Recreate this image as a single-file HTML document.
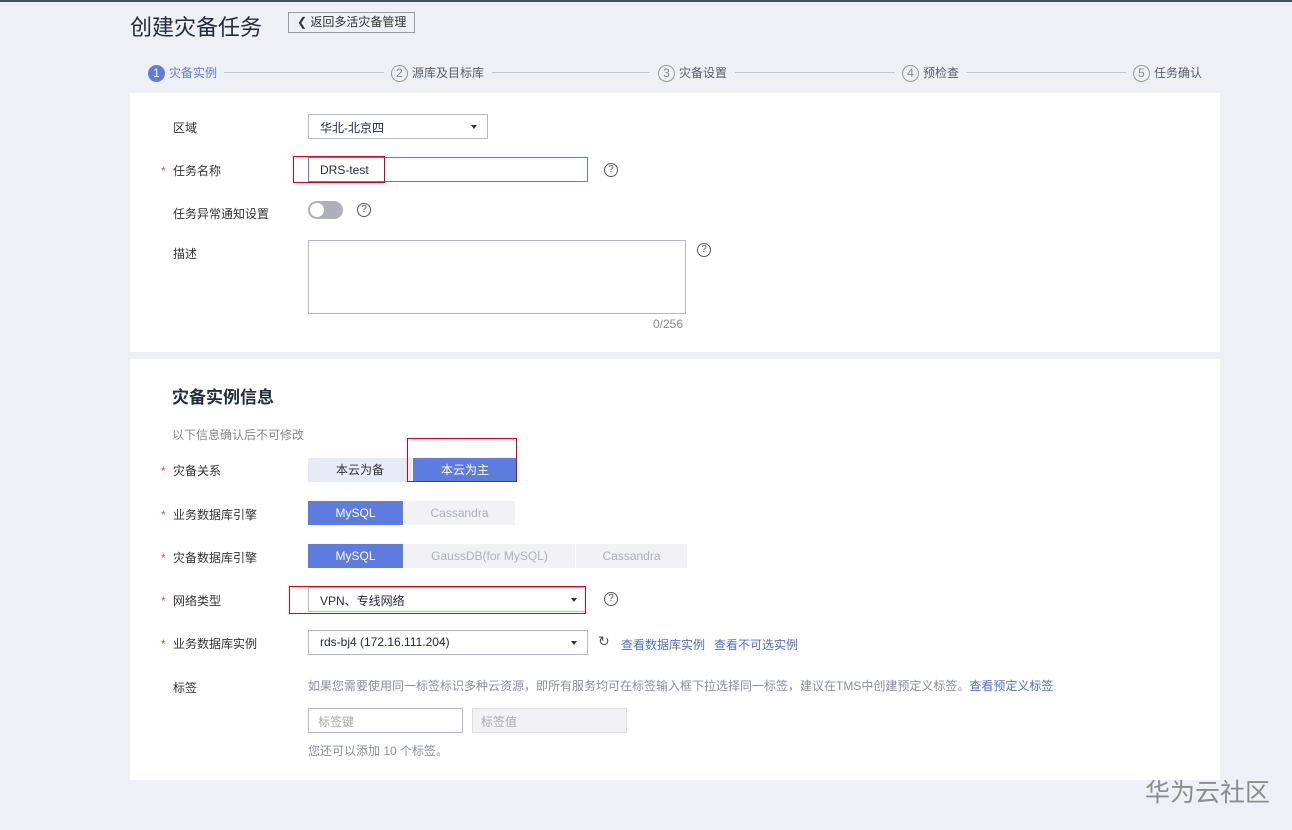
<!DOCTYPE html>
<html><head><meta charset="utf-8"><style>
*{box-sizing:border-box;margin:0;padding:0}
body{width:1292px;height:830px;background:#eff0f5;font-family:"Liberation Sans","Noto Sans CJK SC",sans-serif;font-size:12px;color:#252b3a;position:relative;overflow:hidden}
.a{position:absolute;white-space:nowrap}
.card{position:absolute;background:#fff;left:130px;width:1090px}
.lbl{position:absolute;left:173px;font-size:12px;color:#333;margin-top:-1px}
.star{position:absolute;left:161px;color:#e0533f;margin-top:-1px}
.box{position:absolute;border:1px solid #b5b8c2;background:#fff}
.caret{position:absolute;width:0;height:0;border-left:3px solid transparent;border-right:3px solid transparent;border-top:4px solid #333}
.q{position:absolute;width:14px;height:14px;border:1px solid #555;border-radius:50%;font-size:10px;line-height:12px;text-align:center;color:#555}
.red{position:absolute;border:1px solid #d9001b}
.seg{position:absolute;height:24px;line-height:24px;text-align:center;font-size:12px}
.on{background:#5e7ce0;color:#fff}
.off{background:#f2f2f4;color:#adb0b8}
.step{position:absolute;top:64px;font-size:12px;color:#575d6c}
.num{display:inline-block;width:17px;height:17px;border:1px solid #999;border-radius:50%;text-align:center;line-height:15px;font-size:12px;margin-right:4px;color:#888}
.line{position:absolute;top:72px;height:1px;background:#c4c6cc}
</style></head><body>
<div class="a" style="left:0;top:0;width:1292px;height:2px;background:#4a4f66"></div>
<div class="a" style="left:130px;top:10px;font-size:22px;color:#252b3a">创建灾备任务</div>
<div class="a" style="left:288px;top:12px;width:127px;height:21px;border:1px solid #9a9ca3;font-size:12px;line-height:19px;padding-left:8px;color:#333">❮ 返回多活灾备管理</div>

<div class="step" style="left:148px;color:#5e7ce0"><span class="num" style="background:#5e7ce0;border-color:#5e7ce0;color:#fff">1</span>灾备实例</div>
<div class="line" style="left:224px;width:160px"></div>
<div class="step" style="left:391px"><span class="num">2</span>源库及目标库</div>
<div class="line" style="left:492px;width:158px"></div>
<div class="step" style="left:658px"><span class="num">3</span>灾备设置</div>
<div class="line" style="left:735px;width:160px"></div>
<div class="step" style="left:902px"><span class="num">4</span>预检查</div>
<div class="line" style="left:966px;width:160px"></div>
<div class="step" style="left:1133px"><span class="num">5</span>任务确认</div>

<div class="card" style="top:93px;height:259px"></div>
<div class="lbl" style="top:120px">区域</div>
<div class="box" style="left:308px;top:114px;width:180px;height:25px"></div>
<div class="a" style="left:320px;top:119px">华北-北京四</div>
<div class="caret" style="left:471px;top:125px"></div>

<div class="star" style="top:165px">*</div><div class="lbl" style="top:163px">任务名称</div>
<div class="box" style="left:308px;top:157px;width:280px;height:25px;border-color:#5e7ce0"></div>
<div class="a" style="left:320px;top:163px">DRS-test</div>
<div class="red" style="left:293px;top:156px;width:92px;height:27px"></div>
<div class="q" style="left:604px;top:163px">?</div>

<div class="lbl" style="top:206px">任务异常通知设置</div>
<div class="a" style="left:308px;top:201px;width:35px;height:18px;border-radius:9px;background:#aeb0b6"></div>
<div class="a" style="left:310px;top:203px;width:14px;height:14px;border-radius:50%;background:#fff"></div>
<div class="q" style="left:357px;top:203px">?</div>

<div class="lbl" style="top:246px">描述</div>
<div class="box" style="left:308px;top:240px;width:378px;height:74px"></div>
<div class="q" style="left:697px;top:243px">?</div>
<div class="a" style="left:653px;top:317px;color:#888">0/256</div>

<div class="card" style="top:359px;height:421px"></div>
<div class="a" style="left:172px;top:383px;font-size:17px;font-weight:bold">灾备实例信息</div>
<div class="a" style="left:172px;top:426px;color:#888">以下信息确认后不可修改</div>

<div class="star" style="top:465px">*</div><div class="lbl" style="top:463px">灾备关系</div>
<div class="seg" style="left:308px;top:458px;width:104px;background:#e8ebf7;color:#333">本云为备</div>
<div class="seg on" style="left:413px;top:458px;width:104px">本云为主</div>
<div class="red" style="left:407px;top:438px;width:110px;height:44px"></div>

<div class="star" style="top:509px">*</div><div class="lbl" style="top:507px">业务数据库引擎</div>
<div class="seg on" style="left:308px;top:501px;width:95px">MySQL</div>
<div class="seg off" style="left:404px;top:501px;width:111px">Cassandra</div>

<div class="star" style="top:552px">*</div><div class="lbl" style="top:550px">灾备数据库引擎</div>
<div class="seg on" style="left:308px;top:544px;width:95px">MySQL</div>
<div class="seg off" style="left:404px;top:544px;width:171px">GaussDB(for MySQL)</div>
<div class="seg off" style="left:576px;top:544px;width:111px">Cassandra</div>

<div class="star" style="top:595px">*</div><div class="lbl" style="top:593px">网络类型</div>
<div class="box" style="left:308px;top:587px;width:278px;height:25px"></div>
<div class="a" style="left:320px;top:592px">VPN、专线网络</div>
<div class="caret" style="left:571px;top:598px"></div>
<div class="red" style="left:289px;top:586px;width:297px;height:28px"></div>
<div class="q" style="left:604px;top:592px">?</div>

<div class="star" style="top:638px">*</div><div class="lbl" style="top:636px">业务数据库实例</div>
<div class="box" style="left:308px;top:630px;width:280px;height:25px"></div>
<div class="a" style="left:320px;top:635px">rds-bj4 (172.16.111.204)</div>
<div class="caret" style="left:571px;top:641px"></div>
<div class="a" style="left:598px;top:633px;font-size:14px;color:#555">↻</div>
<div class="a" style="left:621px;top:636px;color:#526ecc">查看数据库实例</div>
<div class="a" style="left:714px;top:636px;color:#526ecc">查看不可选实例</div>

<div class="lbl" style="top:680px">标签</div>
<div class="a" style="left:308px;top:677px;color:#8a8e99">如果您需要使用同一标签标识多种云资源，即所有服务均可在标签输入框下拉选择同一标签，建议在TMS中创建预定义标签。<span style="color:#526ecc">查看预定义标签</span></div>
<div class="box" style="left:308px;top:708px;width:155px;height:25px"></div>
<div class="a" style="left:318px;top:713px;color:#aaa">标签键</div>
<div class="box" style="left:472px;top:708px;width:155px;height:25px;background:#f2f2f4;border-color:#ddd"></div>
<div class="a" style="left:481px;top:713px;color:#aaa">标签值</div>
<div class="a" style="left:308px;top:742px;color:#8a8e99">您还可以添加 10 个标签。</div>

<div class="a" style="left:1145px;top:773px;font-size:25px;color:#8c8c8c">华为云社区</div>
</body></html>
